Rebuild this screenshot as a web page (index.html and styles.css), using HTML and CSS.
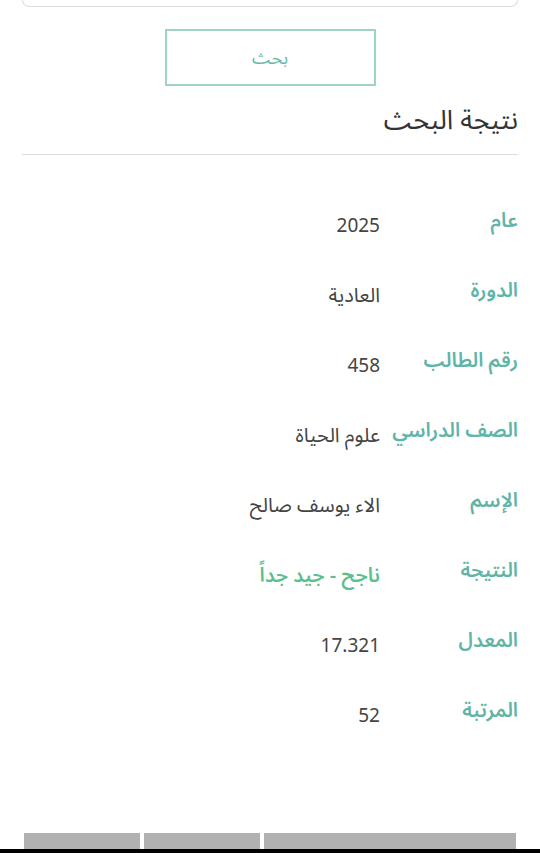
FILE: index.html
```html
<!DOCTYPE html>
<html lang="ar" dir="rtl">
<head>
    <meta charset="UTF-8">
    <title>نتيجة البحث</title>
    <link rel="stylesheet" href="styles.css">
</head>
<body>

    <!-- search form (scrolled) -->
    <div class="field"></div>

    <div class="btn-row">
        <button class="search-btn">بحث</button>
    </div>

    <h2 class="title">نتيجة البحث</h2>
    <hr class="sep">

    <!-- result -->
    <div class="result">
        <div class="row"><span class="label">عام</span><span class="value">2025</span></div>
        <div class="row"><span class="label">الدورة</span><span class="value ar">العادية</span></div>
        <div class="row"><span class="label">رقم الطالب</span><span class="value">458</span></div>
        <div class="row"><span class="label">الصف الدراسي</span><span class="value ar">علوم الحياة</span></div>
        <div class="row"><span class="label">الإسم</span><span class="value ar">الاء يوسف صالح</span></div>
        <div class="row"><span class="label">النتيجة</span><span class="value ar pass">ناجح - جيد جداً</span></div>
        <div class="row"><span class="label">المعدل</span><span class="value">17.321</span></div>
        <div class="row"><span class="label">المرتبة</span><span class="value">52</span></div>
    </div>

    <div class="tabs">
        <div class="tab wide"></div>
        <div class="tab"></div>
        <div class="tab"></div>
    </div>

    <div class="navbar"></div>

</body>
</html>
```

FILE: styles.css
```css
*{
    margin: 0;
    padding: 0;
    box-sizing: border-box;
}

body{
    font-family: "Noto Sans Arabic", "DejaVu Sans", sans-serif;
    background: #fff;
    color: #444;
    height: 853px;
    overflow: hidden;
    display: flex;
    flex-direction: column;
}

.field{
    height: 7px;
    margin: 0 22px;
    border: 1px solid #dcdcdc;
    border-top: none;
    border-radius: 0 0 7px 7px;
}

.btn-row{
    display: flex;
    justify-content: center;
    margin-top: 22px;
}

.search-btn{
    width: 211px;
    height: 57px;
    background: #fff;
    border: 2px solid #9fd2c9;
    color: #6bb8ab;
    font-family: inherit;
    font-size: 18px;
}

.title{
    font-weight: normal;
    font-size: 27px;
    color: #333;
    margin: 13px 22px 0;
    line-height: 44px;
}

.sep{
    border: none;
    border-top: 1px solid #ddd;
    margin: 11px 22px 0;
}

.result{
    margin: 36px 22px 0;
    display: flex;
    flex-direction: column;
}

.row{
    display: flex;
    align-items: center;
    height: 70px;
}

.label{
    width: 138px;
    flex-shrink: 0;
    color: #5fb5a7;
    font-size: 20px;
    font-weight: 600;
    margin-top: -10px;
}

.value{
    font-size: 19px;
    color: #444;
}

.value.ar{
    font-size: 20px;
}

.value.pass{
    color: #5cbf8d;
    font-weight: 600;
}

.tabs{
    margin: auto 24px 0 24px;
    display: flex;
    gap: 4px;
    height: 16px;
}

.tab{
    width: 116px;
    background: #b1b1b1;
}

.tab.wide{
    flex: 1;
}

.navbar{
    height: 4px;
    background: #000;
}
```
